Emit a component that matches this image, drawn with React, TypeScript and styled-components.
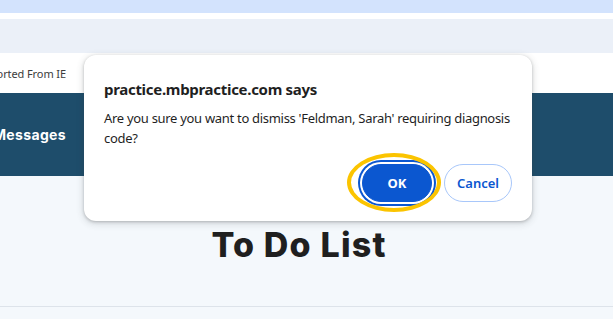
import React from "react";
import styled, { createGlobalStyle } from "styled-components";

const Global = createGlobalStyle`
  html, body { margin: 0; padding: 0; }
  body { width: 613px; height: 319px; overflow: hidden; background: #f4f8fc; font-family: "Noto Sans", "Open Sans", sans-serif; }
`;

const Page = styled.div`
  position: relative;
  width: 613px;
  height: 319px;
  display: flex;
  flex-direction: column;
  overflow: hidden;
`;

const BrowserStrip = styled.div`
  height: 13px;
  background: #d3e3fd;
`;

const WhiteGap = styled.div`
  height: 6px;
  background: #ffffff;
`;

const ToolBand = styled.div`
  height: 34px;
  background: #ebf0f8;
`;

const InfoRow = styled.div`
  height: 40px;
  background: #ffffff;
  display: flex;
  align-items: center;
`;

const ClipRight = styled.div<{ $w: number }>`
  width: ${(p) => p.$w}px;
  display: flex;
  justify-content: flex-end;
  overflow: hidden;
  white-space: nowrap;
`;

const InfoText = styled.span`
  font-family: "Noto Sans", sans-serif;
  font-size: 11px;
  letter-spacing: -0.1px;
  color: #3c3c3c;
`;

const NavBar = styled.div`
  height: 83px;
  background: #1e4d6b;
  display: flex;
  align-items: center;
`;

const NavItem = styled.span`
  font-family: "Inter", "Noto Sans", sans-serif;
  font-weight: 700;
  font-size: 14px;
  color: #ffffff;
  letter-spacing: 0.35px;
`;

const Content = styled.div`
  flex: 1;
  background: #f4f8fc;
  display: flex;
  flex-direction: column;
  padding-right: 15px;
`;

const Title = styled.h1`
  margin: 49px 0 0;
  text-align: center;
  font-family: "Inter", "Noto Sans", sans-serif;
  font-weight: 800;
  font-size: 34px;
  line-height: 40px;
  color: #1f1f1f;
  letter-spacing: 1.2px;
`;

const Divider = styled.div`
  margin-top: 41px;
  margin-right: -15px;
  height: 1px;
  background: #dde3ea;
`;

const Dialog = styled.div`
  position: absolute;
  left: 84px;
  top: 55px;
  width: 448px;
  box-sizing: border-box;
  padding: 23px 20px 19px;
  background: #ffffff;
  border-radius: 12px;
  box-shadow: 0 1px 3px rgba(60, 64, 67, 0.3), 0 2px 6px 2px rgba(60, 64, 67, 0.12);
  font-family: "Noto Sans", "Open Sans", sans-serif;
  color: #1f1f1f;
`;

const DialogTitle = styled.div`
  font-size: 15px;
  font-weight: 700;
  line-height: 22px;
  letter-spacing: -0.3px;
`;

const DialogMessage = styled.div`
  margin-top: 8px;
  font-size: 13px;
  line-height: 20px;
  letter-spacing: -0.3px;
`;

const Actions = styled.div`
  margin-top: 16px;
  display: flex;
  justify-content: flex-end;
  gap: 12px;
`;

const Button = styled.button<{ $primary?: boolean }>`
  position: relative;
  height: 38px;
  width: ${(p) => (p.$primary ? "70px" : "68px")};
  border-radius: 19px;
  font-family: "Noto Sans", sans-serif;
  font-size: 13px;
  font-weight: ${(p) => (p.$primary ? 700 : 600)};
  cursor: pointer;
  padding: 0;
  border: 1px solid ${(p) => (p.$primary ? "#0b57d0" : "#a8c7fa")};
  background: ${(p) => (p.$primary ? "#0b57d0" : "#ffffff")};
  color: ${(p) => (p.$primary ? "#ffffff" : "#0b57d0")};
  box-shadow: ${(p) => (p.$primary ? "0 0 0 2px #ffffff, 0 0 0 4px #0b57d0" : "none")};
`;

const FocusHalo = styled.span`
  position: absolute;
  left: -16px;
  right: -10px;
  top: -12px;
  bottom: -11px;
  border: 4px solid #fbc400;
  border-radius: 50% / 50%;
  pointer-events: none;
`;

export default function App() {
  return (
    <>
      <Global />
      <Page>
        <BrowserStrip />
        <WhiteGap />
        <ToolBand />
        <InfoRow>
          <ClipRight $w={66}>
            <InfoText>Not Supported From IE</InfoText>
          </ClipRight>
        </InfoRow>
        <NavBar>
          <ClipRight $w={66}>
            <NavItem>Messages</NavItem>
          </ClipRight>
        </NavBar>
        <Content>
          <Title>To Do List</Title>
          <Divider />
        </Content>
        <Dialog role="alertdialog">
          <DialogTitle>practice.mbpractice.com says</DialogTitle>
          <DialogMessage>
            Are you sure you want to dismiss 'Feldman, Sarah' requiring diagnosis code?
          </DialogMessage>
          <Actions>
            <Button $primary>
              OK
              <FocusHalo />
            </Button>
            <Button>Cancel</Button>
          </Actions>
        </Dialog>
      </Page>
    </>
  );
}
